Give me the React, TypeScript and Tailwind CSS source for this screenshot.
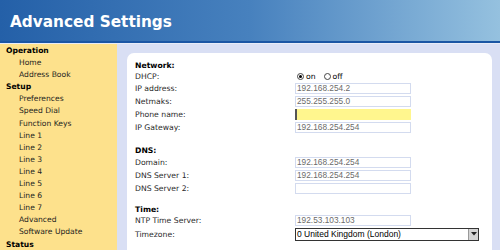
import React from "react";

const sidebar: { t: string; h?: boolean }[] = [
  { t: "Operation", h: true },
  { t: "Home" },
  { t: "Address Book" },
  { t: "Setup", h: true },
  { t: "Preferences" },
  { t: "Speed Dial" },
  { t: "Function Keys" },
  { t: "Line 1" },
  { t: "Line 2" },
  { t: "Line 3" },
  { t: "Line 4" },
  { t: "Line 5" },
  { t: "Line 6" },
  { t: "Line 7" },
  { t: "Advanced" },
  { t: "Software Update" },
  { t: "Status", h: true },
];

function Label({ children }: { children: React.ReactNode }) {
  return <div className="w-[160px] shrink-0 text-[#2a2a2a]">{children}</div>;
}

function TextBox({ value, yellow }: { value?: string; yellow?: boolean }) {
  if (yellow) {
    return (
      <div className="w-[116px] h-[11px] bg-[#fff68e] border-l-2 border-[#555] flex items-center" />
    );
  }
  return (
    <div
      className="w-[116px] h-[11px] bg-white border border-[#d3dbef] flex items-center pl-px text-[#6a6a6a] text-[8.3px] leading-none"
      style={{ fontFamily: '"Liberation Sans", Arial, sans-serif' }}
    >
      {value}
    </div>
  );
}

function Row({ label, children }: { label: string; children: React.ReactNode }) {
  return (
    <div className="h-[13px] flex items-center">
      <Label>{label}</Label>
      {children}
    </div>
  );
}

function Radio({ on }: { on?: boolean }) {
  return (
    <span className="w-[7px] h-[7px] rounded-full border border-[#444] bg-white flex items-center justify-center">
      {on ? <span className="w-[3px] h-[3px] rounded-full bg-black" /> : null}
    </span>
  );
}

export default function App() {
  return (
    <div
      className="w-[500px] h-[250px] overflow-hidden flex flex-col bg-[#d9dff4]"
      style={{ fontFamily: '"DejaVu Sans", Verdana, sans-serif' }}
    >
      <div className="h-[41px] shrink-0 bg-gradient-to-r from-[#2460a8] via-[#4781be] to-[#95c1df] pl-[10px] pt-[13px]">
        <div className="text-white font-bold text-[15.3px] leading-[18px]">Advanced Settings</div>
      </div>
      <div className="h-[2px] shrink-0 bg-[#1b56a4]" />
      <div className="h-px shrink-0 bg-[#e8ecf8]" />
      <div className="flex flex-1 min-h-0">
        <div className="w-[117px] shrink-0 bg-[#fde18c] pt-px text-[7.6px] leading-[12.1px] text-[#1e1e1e]">
          {sidebar.map((s) =>
            s.h ? (
              <div key={s.t} className="pl-[6px] font-bold text-black">
                {s.t}
              </div>
            ) : (
              <div key={s.t} className="pl-[19px]">
                {s.t}
              </div>
            )
          )}
        </div>
        <div className="flex-1 pl-[10px] pr-[8px] pt-[9px] flex flex-col">
          <div className="flex-1 bg-white rounded-t-[7px] pl-[8px] pt-[7px] text-[7.7px] leading-[11px]">
            <div className="h-[11px] font-bold text-black">Network:</div>
            <div className="h-[11px] flex items-center">
              <Label>DHCP:</Label>
              <div className="flex items-center gap-[2px] text-black pl-[2px]">
                <Radio on />
                <span>on</span>
                <span className="w-[4px]" />
                <Radio />
                <span>off</span>
              </div>
            </div>
            <Row label="IP address:">
              <TextBox value="192.168.254.2" />
            </Row>
            <Row label="Netmaks:">
              <TextBox value="255.255.255.0" />
            </Row>
            <Row label="Phone name:">
              <TextBox yellow />
            </Row>
            <Row label="IP Gateway:">
              <TextBox value="192.168.254.254" />
            </Row>

            <div className="h-[11px] mt-[11px] font-bold text-black">DNS:</div>
            <Row label="Domain:">
              <TextBox value="192.168.254.254" />
            </Row>
            <Row label="DNS Server 1:">
              <TextBox value="192.168.254.254" />
            </Row>
            <Row label="DNS Server 2:">
              <TextBox />
            </Row>

            <div className="h-[10px] mt-[9px] font-bold text-black">Time:</div>
            <Row label="NTP Time Server:">
              <TextBox value="192.53.103.103" />
            </Row>
            <div className="h-[14px] flex items-center">
              <Label>Timezone:</Label>
              <div
                className="w-[184px] h-[13px] border border-[#333] bg-white flex items-center text-[8.5px] text-black leading-none"
                style={{ fontFamily: '"Liberation Sans", Arial, sans-serif' }}
              >
                <span className="flex-1 pl-px">0 United Kingdom (London)</span>
                <span className="w-[10px] h-[11px] bg-[#d4d4d4] border-l border-[#999] flex items-center justify-center">
                  <svg width="6" height="4" viewBox="0 0 6 4">
                    <path d="M0 0 H6 L3 3.5 Z" fill="#222" />
                  </svg>
                </span>
              </div>
            </div>
          </div>
        </div>
      </div>
    </div>
  );
}
